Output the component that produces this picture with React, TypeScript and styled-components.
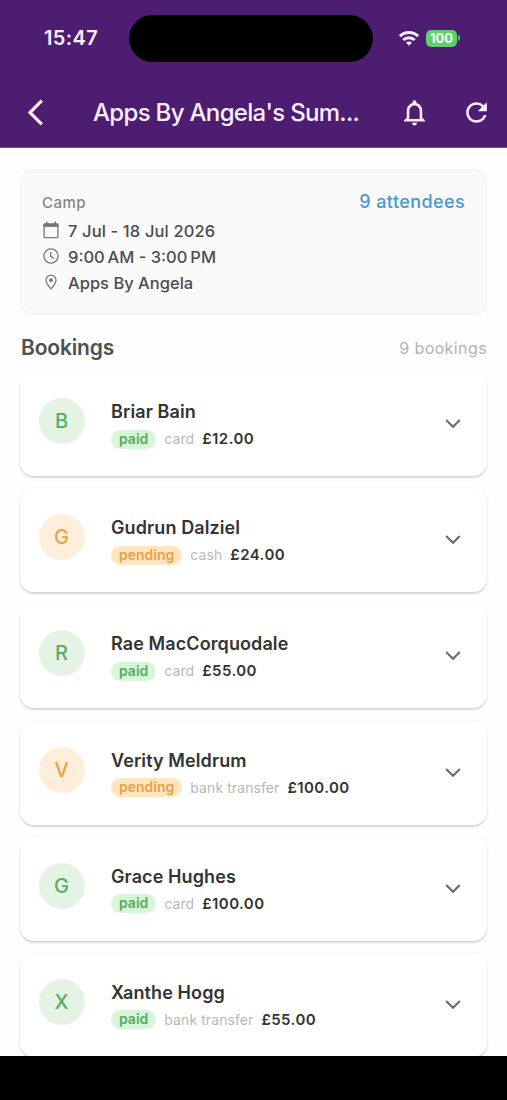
import React from 'react';
import styled, { createGlobalStyle } from 'styled-components';
import { MdArrowBackIosNew, MdNotificationsNone, MdRefresh } from 'react-icons/md';

type Status = 'paid' | 'pending';

interface Booking {
  name: string;
  status: Status;
  method: string;
  amount: string;
}

const bookings: Booking[] = [
  { name: 'Briar Bain', status: 'paid', method: 'card', amount: '£12.00' },
  { name: 'Gudrun Dalziel', status: 'pending', method: 'cash', amount: '£24.00' },
  { name: 'Rae MacCorquodale', status: 'paid', method: 'card', amount: '£55.00' },
  { name: 'Verity Meldrum', status: 'pending', method: 'bank transfer', amount: '£100.00' },
  { name: 'Grace Hughes', status: 'paid', method: 'card', amount: '£100.00' },
  { name: 'Xanthe Hogg', status: 'paid', method: 'bank transfer', amount: '£55.00' },
];

const palette = {
  paid: { soft: '#e4f3e4', pill: '#d6f5d9', text: '#5aac61' },
  pending: { soft: '#ffeeda', pill: '#ffe6be', text: '#eaa145' },
};

const GlobalStyle = createGlobalStyle`
  *, *::before, *::after { box-sizing: border-box; }
  body { margin: 0; background: #fff; }
`;

const Screen = styled.div`
  display: flex;
  flex-direction: column;
  width: 507px;
  height: 1100px;
  overflow: hidden;
  background: #fefefe;
  font-family: Inter, 'Liberation Sans', sans-serif;
  white-space: nowrap;
`;

const Header = styled.header`
  flex: none;
  height: 148px;
  background: #4c1d70;
  color: #fdeeff;
  border-bottom: 1px solid #6d4a88;
`;

const StatusBar = styled.div`
  display: grid;
  grid-template-columns: 129px 244px 134px;
  align-items: center;
  height: 76px;
`;

const Clock = styled.span`
  padding: 0 0 0 44px;
  font-size: 20px;
  line-height: 24px;
  font-weight: 600;
  letter-spacing: 0.4px;
`;

const Island = styled.div`
  height: 47px;
  border-radius: 24px;
  background: #000;
`;

const Indicators = styled.div`
  display: flex;
  align-items: center;
  gap: 7px;
  padding-left: 26px;
`;

const Battery = styled.div`
  display: flex;
  align-items: center;
`;

const BatteryLevel = styled.span`
  width: 31px;
  height: 17px;
  border-radius: 5px;
  background: #5fcf70;
  color: #f4fff4;
  font-size: 13px;
  line-height: 17px;
  font-weight: 700;
  text-align: center;
`;

const BatteryTip = styled.span`
  width: 2px;
  height: 6px;
  margin-left: 1px;
  border-radius: 0 2px 2px 0;
  background: #5fae80;
`;

const NavBar = styled.nav`
  display: flex;
  align-items: center;
  height: 72px;
  padding: 0 15px 0 20px;
`;

const Title = styled.h1`
  flex: 1;
  margin: 2px 0 0 42px;
  font-size: 24px;
  line-height: 30px;
  font-weight: 500;
  letter-spacing: -0.68px;
`;

const NavActions = styled.div`
  display: flex;
  gap: 31px;
`;

const Content = styled.main`
  flex: 1;
  min-height: 0;
  overflow: hidden;
  padding: 21px 20px 0;
`;

const Summary = styled.section`
  display: flex;
  justify-content: space-between;
  height: 146px;
  padding: 20px 20px 0;
  border: 2px solid #f5f5f5;
  border-radius: 12px;
  background: #fafafa;
`;

const SummaryDetails = styled.div`
  display: flex;
  flex-direction: column;
`;

const Kind = styled.span`
  height: 26px;
  font-size: 15px;
  line-height: 23px;
  font-weight: 500;
  letter-spacing: 0.5px;
  color: #868686;
`;

const Detail = styled.div`
  display: flex;
  align-items: center;
  gap: 8px;
  height: 26px;
  color: #777;
`;

const DetailText = styled.span<{ $tracking: number }>`
  padding-top: 1px;
  font-size: 16.5px;
  line-height: 22px;
  font-weight: 450;
  letter-spacing: ${(p) => p.$tracking}px;
  color: #4c4c4c;
`;

const Attendees = styled.span`
  font-size: 18px;
  line-height: 22px;
  font-weight: 500;
  letter-spacing: 0.4px;
  color: #4599d2;
`;

const SectionHead = styled.div`
  display: flex;
  align-items: center;
  justify-content: space-between;
  height: 57px;
  padding: 8px 0 0 1px;
`;

const SectionTitle = styled.h2`
  margin: 0;
  font-size: 21px;
  line-height: 28px;
  font-weight: 600;
  letter-spacing: -0.15px;
  color: #505050;
`;

const Count = styled.span`
  font-size: 16px;
  line-height: 22px;
  font-weight: 400;
  letter-spacing: 0.4px;
  color: #b2b2b2;
`;

const List = styled.div`
  display: flex;
  flex-direction: column;
  gap: 12.2px;
`;

const Card = styled.article`
  display: flex;
  align-items: center;
  flex: none;
  height: 104px;
  padding: 0 19px;
  border-radius: 14px;
  background: #fff;
  box-shadow: 0 2px 2px rgba(0, 0, 0, 0.14), 0 0 3px rgba(0, 0, 0, 0.06);
`;

const Avatar = styled.div<{ $status: Status }>`
  width: 46px;
  height: 46px;
  margin: 0 26px 6px 0;
  padding-right: 1px;
  border-radius: 50%;
  background: ${(p) => palette[p.$status].soft};
  color: ${(p) => palette[p.$status].text};
  font-size: 20px;
  line-height: 46px;
  font-weight: 500;
  text-align: center;
`;

const Info = styled.div`
  flex: 1;
  padding-top: 1px;
`;

const Name = styled.div`
  font-size: 18px;
  line-height: 24px;
  font-weight: 600;
  letter-spacing: 0.1px;
  color: #333;
`;

const Payment = styled.div`
  display: flex;
  align-items: center;
  height: 20px;
  margin-top: 5px;
`;

const Pill = styled.span<{ $status: Status }>`
  height: 19px;
  padding: 0 8px;
  border-radius: 10px;
  background: ${(p) => palette[p.$status].pill};
  color: ${(p) => palette[p.$status].text};
  font-size: 14px;
  line-height: 18px;
  font-weight: 600;
`;

const Method = styled.span`
  margin: 0 8px;
  font-size: 14px;
  line-height: 20px;
  letter-spacing: 0.08px;
  color: #b8b8b8;
`;

const Amount = styled.span`
  font-size: 15px;
  line-height: 20px;
  font-weight: 600;
  letter-spacing: 0.42px;
  color: #333;
`;

const HomeArea = styled.footer`
  flex: none;
  height: 44px;
  background: #000;
`;

const CalendarIcon = () => (
  <svg width="18" height="18" viewBox="0 0 18 18" fill="none" stroke="currentColor">
    <rect x="2.1" y="3" width="13.8" height="13.6" rx="0.8" strokeWidth="1.3" />
    <path d="M1.5 4.4h15" strokeWidth="3" />
    <path d="M4.8 0.8v3M13.2 0.8v3" strokeWidth="1.6" />
  </svg>
);

const ClockIcon = () => (
  <svg width="18" height="18" viewBox="0 0 18 18" fill="none" stroke="currentColor" strokeWidth="1.3">
    <circle cx="9" cy="9" r="7.1" />
    <path d="M8.7 4.8v4.6l3.4 2.1" />
  </svg>
);

const PinIcon = () => (
  <svg width="18" height="18" viewBox="0 0 18 18" fill="none" stroke="currentColor" strokeWidth="1.3">
    <path d="M9 15.9C6.2 12.7 4 10 4 7.2a5 5 0 0 1 10 0c0 2.8-2.2 5.5-5 8.7z" />
    <circle cx="9" cy="7.2" r="1.9" fill="currentColor" stroke="none" />
  </svg>
);

const ExpandIcon = () => (
  <svg width="30" height="30" viewBox="0 0 30 30" fill="none" stroke="#6a6a6a" strokeWidth="2.1">
    <path d="M8.2 11l6.8 6.8 6.8-6.8" />
  </svg>
);

const WifiIcon = () => (
  <svg width="20" height="15" viewBox="0 0 20 15" fill="none" stroke="currentColor" strokeWidth="3">
    <path d="M1 5.2C6 .4 14 .4 19 5.2" />
    <path d="M4.3 9c3.2-3 8.2-3 11.4 0" />
    <path d="M10 14.8l-3-3.2c1.8-1.4 4.2-1.4 6 0z" fill="currentColor" stroke="none" />
  </svg>
);

export default function App() {
  return (
    <Screen>
      <GlobalStyle />
      <Header>
        <StatusBar>
          <Clock>15:47</Clock>
          <Island />
          <Indicators>
            <WifiIcon />
            <Battery>
              <BatteryLevel>100</BatteryLevel>
              <BatteryTip />
            </Battery>
          </Indicators>
        </StatusBar>
        <NavBar>
          <MdArrowBackIosNew size={31} />
          <Title>Apps By Angela's Sum...</Title>
          <NavActions>
            <MdNotificationsNone size={31} />
            <MdRefresh size={31} />
          </NavActions>
        </NavBar>
      </Header>
      <Content>
        <Summary>
          <SummaryDetails>
            <Kind>Camp</Kind>
            <Detail>
              <CalendarIcon />
              <DetailText $tracking={0.13}>7 Jul - 18 Jul 2026</DetailText>
            </Detail>
            <Detail>
              <ClockIcon />
              <DetailText $tracking={0}>9:00{'\u2009'}AM - 3:00{'\u2009'}PM</DetailText>
            </Detail>
            <Detail>
              <PinIcon />
              <DetailText $tracking={0}>Apps By Angela</DetailText>
            </Detail>
          </SummaryDetails>
          <Attendees>9 attendees</Attendees>
        </Summary>
        <SectionHead>
          <SectionTitle>Bookings</SectionTitle>
          <Count>9 bookings</Count>
        </SectionHead>
        <List>
          {bookings.map((b) => (
            <Card key={b.name}>
              <Avatar $status={b.status}>{b.name[0]}</Avatar>
              <Info>
                <Name>{b.name}</Name>
                <Payment>
                  <Pill $status={b.status}>{b.status}</Pill>
                  <Method>{b.method}</Method>
                  <Amount>{b.amount}</Amount>
                </Payment>
              </Info>
              <ExpandIcon />
            </Card>
          ))}
        </List>
      </Content>
      <HomeArea />
    </Screen>
  );
}
